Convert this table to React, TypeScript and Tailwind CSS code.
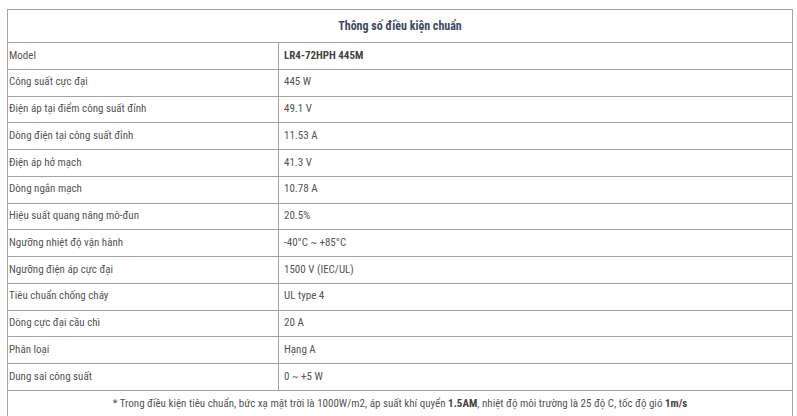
import React from "react";

const rows: [string, React.ReactNode][] = [
  ["Model", <strong className="font-bold text-[#444]">LR4-72HPH 445M</strong>],
  ["Công suất cực đại", "445 W"],
  ["Điện áp tại điểm công suất đỉnh", "49.1 V"],
  ["Dòng điện tại công suất đỉnh", "11.53 A"],
  ["Điện áp hở mạch", "41.3 V"],
  ["Dòng ngắn mạch", "10.78 A"],
  ["Hiệu suất quang năng mô-đun", "20.5%"],
  ["Ngưỡng nhiệt độ vận hành", "-40°C ~ +85°C"],
  ["Ngưỡng điện áp cực đại", "1500 V (IEC/UL)"],
  ["Tiêu chuẩn chống cháy", "UL type 4"],
  ["Dòng cực đại cầu chì", "20 A"],
  ["Phân loại", "Hạng A"],
  ["Dung sai công suất", "0 ~ +5 W"],
];

export default function App() {
  return (
    <div
      className="w-[797px] h-[416px] overflow-hidden bg-white pt-[9px] pl-[7px] text-[11px] text-[#555]"
      style={{ fontFamily: '"Roboto Condensed", "Liberation Sans Narrow", Roboto, sans-serif' }}
    >
      <table className="w-[786px] border-collapse border border-[#a3a3a3]">
        <tbody>
          <tr className="h-[33px]">
            <th colSpan={2} className="border border-[#a3a3a3] text-center text-[12px] font-bold text-[#3e4a68]">
              Thông số điều kiện chuẩn
            </th>
          </tr>
          {rows.map(([label, value]) => (
            <tr key={label} className="h-[26.75px]">
              <td className="w-[271px] border border-[#a3a3a3] pl-px">{label}</td>
              <td className="border border-[#a3a3a3] pl-[5px]">{value}</td>
            </tr>
          ))}
          <tr className="h-[27px]">
            <td colSpan={2} className="border border-[#a3a3a3] text-center">
              * Trong điều kiện tiêu chuẩn, bức xạ mặt trời là 1000W/m2, áp suất khí quyển{" "}
              <strong className="font-bold text-[#444]">1.5AM</strong>, nhiệt độ môi trường là 25 độ C, tốc độ gió{" "}
              <strong className="font-bold text-[#444]">1m/s</strong>
            </td>
          </tr>
        </tbody>
      </table>
    </div>
  );
}
